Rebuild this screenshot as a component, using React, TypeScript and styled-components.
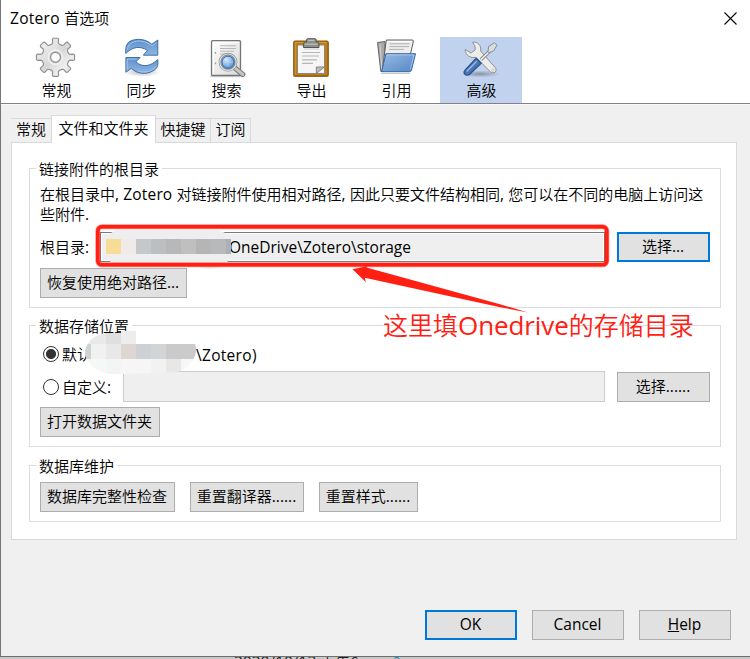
import React from "react";
import styled, { createGlobalStyle } from "styled-components";

const GlobalStyle = createGlobalStyle`
  * { box-sizing: border-box; }
  html, body { margin: 0; padding: 0; }
  body {
    width: 750px;
    height: 659px;
    overflow: hidden;
    background: #c9c9c9;
    color: #000;
    font: 350 15px/20px "Noto Sans CJK SC", "Noto Sans", sans-serif;
  }
`;

const Screen = styled.div`
  position: relative;
  width: 750px;
  height: 659px;
  overflow: hidden;
  display: flex;
  flex-direction: column;
`;

const Dialog = styled.div`
  height: 657px;
  flex: none;
  display: flex;
  flex-direction: column;
  background: #f0f0f0;
  border-left: 1px solid #777;
  border-bottom: 1px solid #6f6f6f;
`;

const Latin = styled.span<{ $spacing?: number; $size?: number }>`
  font-family: "Open Sans", "Noto Sans", sans-serif;
  font-size: ${(p) => p.$size ?? 15.5}px;
  font-weight: 400;
  line-height: 1;
  letter-spacing: ${(p) => p.$spacing ?? 0}px;
  white-space: pre;
`;

const TitleBar = styled.header`
  height: 37px;
  display: flex;
  align-items: center;
  justify-content: space-between;
  padding: 0 13px 1px 9px;
  background: #fff;
`;

const Toolbar = styled.nav`
  display: flex;
  gap: 3px;
  height: 67px;
  padding-left: 14px;
  background: #fff;
  border-bottom: 1px solid #858087;
`;

const ToolButton = styled.div<{ $active?: boolean }>`
  width: 82px;
  height: 66px;
  display: flex;
  flex-direction: column;
  align-items: center;
  background: ${(p) => (p.$active ? "#c1d2ee" : "transparent")};
  svg { flex: none; display: block; }
  span { line-height: 20px; margin: 1px 0 0 1px; }
`;

const TabStrip = styled.div`
  display: flex;
  align-items: flex-end;
  height: 38px;
  padding-left: 10px;
  border-top: 1px solid #fafafa;
`;

const Tab = styled.div<{ $width: number; $active?: boolean; $first?: boolean }>`
  width: ${(p) => p.$width}px;
  height: ${(p) => (p.$active ? 28 : 24)}px;
  margin-bottom: ${(p) => (p.$active ? -1 : 0)}px;
  padding-bottom: ${(p) => (p.$active ? 4 : 3)}px;
  z-index: ${(p) => (p.$active ? 1 : 0)};
  display: flex;
  align-items: center;
  justify-content: center;
  white-space: nowrap;
  background: ${(p) => (p.$active ? "#fff" : "#f0f0f0")};
  border: solid #d9d9d9;
  border-width: ${(p) => (p.$active ? "1px 1px 0" : p.$first ? "1px 0 0" : "1px 1px 0 0")};
`;

const Panel = styled.main`
  width: 726px;
  height: 398px;
  margin-left: 10px;
  padding: 17px 15px 0 17px;
  display: flex;
  flex-direction: column;
  background: #fff;
  border: 1px solid #d9d9d9;
`;

const Group = styled.section<{ $height: number; $top: number }>`
  height: ${(p) => p.$height}px;
  margin-top: ${(p) => p.$top}px;
  border: 1px solid #dcdcdc;
  padding: 0 10px;
  display: flex;
  flex-direction: column;
  align-items: flex-start;
`;

const Legend = styled.h2`
  margin: -10px 0 0 -4px;
  padding: 0 3px;
  height: 20px;
  font: inherit;
  background: #fff;
  white-space: nowrap;
`;

const Description = styled.p`
  margin: 5px 0 8px;
  line-height: 20px;
  white-space: nowrap;
`;

const Row = styled.div<{ $height?: number; $top?: number }>`
  width: 100%;
  height: ${(p) => p.$height ?? 30}px;
  margin-top: ${(p) => p.$top ?? 0}px;
  display: flex;
  align-items: center;
`;

const Label = styled.label<{ $width?: number }>`
  width: ${(p) => (p.$width ? `${p.$width}px` : "auto")};
  flex: none;
  white-space: nowrap;
`;

const Field = styled.div<{ $width: number; $height: number; $dim?: boolean }>`
  width: ${(p) => p.$width}px;
  height: ${(p) => p.$height}px;
  flex: none;
  margin-right: 12px;
  padding: 2px 0 0 ${(p) => (p.$dim ? 0 : 128)}px;
  display: flex;
  align-items: center;
  background: #efefef;
  border: 1px solid ${(p) => (p.$dim ? "#ccc" : "#7a7a7a")};
  box-shadow: ${(p) => (p.$dim ? "none" : "inset 0 0 0 1px #fff")};
`;

const Button = styled.button<{ $width: number; $primary?: boolean }>`
  width: ${(p) => p.$width}px;
  height: 30px;
  flex: none;
  padding: 0 1px 2px 0;
  font: inherit;
  color: #000;
  white-space: nowrap;
  background: #e1e1e1;
  border: ${(p) => (p.$primary ? "2px solid #0078d7" : "1px solid #adadad")};
  border-radius: 0;
`;

const Spaced = styled.div<{ $top: number }>`
  margin-top: ${(p) => p.$top}px;
  display: flex;
  gap: 15px;
`;

const Radio = styled.i<{ $on?: boolean }>`
  width: 16px;
  height: 16px;
  margin: 0 3px 0 3px;
  flex: none;
  border: 1px solid #333;
  border-radius: 50%;
  background: ${(p) => (p.$on ? "radial-gradient(circle, #333 4.6px, #fff 5.4px)" : "#fff")};
`;

const HiddenPath = styled.span`
  width: 104px;
  flex: none;
`;

const ProfilePath = styled.div`
  padding-top: 3px;
  display: flex;
`;

const Footer = styled.footer`
  display: flex;
  justify-content: flex-end;
  gap: 15px;
  margin-top: 70px;
  padding-right: 19px;
`;

const Behind = styled.div`
  height: 2px;
  flex: none;
  overflow: hidden;
  display: flex;
  gap: 30px;
  padding-left: 234px;
  color: #222;
  > span { margin-top: -5px; }
  > span + span { color: #2889b5; }
`;

const Overlay = styled.svg`
  position: absolute;
  inset: 0;
  pointer-events: none;
`;

const Note = styled.div`
  position: absolute;
  left: 383px;
  top: 306px;
  height: 36px;
  font-size: 25px;
  line-height: 36px;
  color: #ff2013;
  white-space: nowrap;
`;

const iconProps = (i: number) => ({
  width: 44,
  height: 42,
  viewBox: `${34 + 85 * i} 37 44 42`,
});

function gearPath() {
  const pts: string[] = [];
  for (let k = 0; k < 8; k++) {
    const base = (k * Math.PI) / 4;
    for (const [da, r] of [[-0.29, 13.6], [-0.2, 14.6], [-0.17, 18.3], [-0.12, 19.2], [0.12, 19.2], [0.17, 18.3], [0.2, 14.6], [0.29, 13.6]]) {
      pts.push(`${(55.5 + r * Math.sin(base + da)).toFixed(2)} ${(57.3 - r * Math.cos(base + da)).toFixed(2)}`);
    }
  }
  return `M${pts.join("L")}Z`;
}

const GearIcon = () => (
  <svg {...iconProps(0)}>
    <defs>
      <linearGradient id="gear" x1="0" y1="0" x2="1" y2="1">
        <stop offset="0" stopColor="#fafafa" />
        <stop offset=".5" stopColor="#d7d7d7" />
        <stop offset=".75" stopColor="#f0f0f0" />
        <stop offset="1" stopColor="#cfcfcf" />
      </linearGradient>
    </defs>
    <path d={gearPath()} fill="url(#gear)" stroke="#929292" strokeWidth="1.2" strokeLinejoin="round" />
    <circle cx="55.5" cy="57.3" r="7.2" fill="none" stroke="#f1f1f1" strokeWidth="1.5" />
    <circle cx="55.5" cy="57.3" r="5" fill="#fff" stroke="#979797" strokeWidth="1.4" />
  </svg>
);

const SyncIcon = () => (
  <svg {...iconProps(1)}>
    <defs>
      <linearGradient id="sync" x1="0" y1="0" x2="0" y2="1">
        <stop offset="0" stopColor="#5f91cb" />
        <stop offset="1" stopColor="#8db5e1" />
      </linearGradient>
      <radialGradient id="syncShade">
        <stop offset="0" stopColor="#777" stopOpacity=".5" />
        <stop offset="1" stopColor="#777" stopOpacity="0" />
      </radialGradient>
    </defs>
    <ellipse cx="142" cy="72" rx="19" ry="5" fill="url(#syncShade)" />
    <path d="M125.8 53.5C125.3 46 127 43 130 41.3C137 37.8 146 39.2 151.8 44.2L157.8 40V55.2H143.3L147.5 50.5C140 45.3 132 47 125.8 53.5Z" fill="url(#sync)" stroke="#3d6fae" />
    <path d="M125.9 57.5H140.2L135.8 61.8C143 68.2 151 66 157.8 59.5C158.5 66 157 68.5 153.8 70.4C146 75.2 137 73.8 131.2 68.4L125.9 72.2Z" fill="url(#sync)" stroke="#3d6fae" />
    <path d="M127.3 49C129 40.5 142 37.6 152 46L156.5 42.5M127.2 70V59H137M138 71C145 73.5 153 71 156.2 66" fill="none" stroke="#a8c7e9" strokeWidth="1" />
  </svg>
);

const SearchIcon = () => (
  <svg {...iconProps(2)}>
    <defs>
      <radialGradient id="lens" cx=".4" cy=".35">
        <stop offset="0" stopColor="#dcecff" />
        <stop offset="1" stopColor="#5e98dc" />
      </radialGradient>
      <linearGradient id="page" x1="0" y1="0" x2="1" y2="1">
        <stop offset="0" stopColor="#fff" />
        <stop offset="1" stopColor="#d9d9d9" />
      </linearGradient>
    </defs>
    <path d="M210 76.4H242" stroke="#aaa" strokeWidth="1.5" opacity=".5" />
    <rect x="211.5" y="40.7" width="29" height="34.8" rx="1" fill="url(#page)" stroke="#74767a" strokeWidth="1.3" />
    <path d="M213.3 74V42.5H239" fill="none" stroke="#fff" />
    <path d="M220 45.8h16M220 48.5h16M220 51.2h14M220 54h5" stroke="#b5b5b5" />
    <path d="M215.5 52v1.8M215.5 62.5v1.8" stroke="#999" strokeWidth="1.3" />
    <path d="M235 68L242.8 74.4" stroke="#777" strokeWidth="5.2" strokeLinecap="round" />
    <path d="M235 68L242.8 74.4" stroke="#c4c4c1" strokeWidth="3.2" strokeLinecap="round" />
    <circle cx="228" cy="62.2" r="8" fill="url(#lens)" stroke="#858783" strokeWidth="2.7" />
    <circle cx="228" cy="62.2" r="8.2" fill="none" stroke="#e1e1df" strokeWidth="1.2" />
    <circle cx="228" cy="62.2" r="6" fill="none" stroke="#3c70b5" />
    <path d="M223 62.2h10M228 57.5v9" stroke="#b8d4f5" opacity=".7" />
  </svg>
);

const ExportIcon = () => (
  <svg {...iconProps(3)}>
    <path d="M293 76.5h36" stroke="#777" opacity=".35" />
    <rect x="293.8" y="41" width="34.4" height="35.2" rx="1.5" fill="#c17d11" stroke="#815207" strokeWidth="1.2" />
    <path d="M295.3 75V42.5H326.8" fill="none" stroke="#d99c3b" opacity=".8" />
    <path d="M297.5 45H324.5V73.5H297.5Z" fill="#f6f6f6" stroke="#878787" />
    <path d="M316.3 73.5V67H324.5Z" fill="#b9bab7" stroke="#888" />
    <path d="M302 52.5h18M302 56h17M302 59.8h15M302 63.4h11" stroke="#b6b6b6" strokeWidth="1.2" />
    <path d="M303.5 47.5V43.5Q303.5 42 305.5 42H306.5V39.8Q306.5 38.7 308 38.7H315Q316.2 38.7 316.2 39.8V42H317Q319 42 319 43.5V47.5Z" fill="#8e908c" stroke="#555753" />
    <path d="M305 44.2H317.5M308 40.3H314.5" stroke="#c9cbc8" />
    <path d="M304 49H319" stroke="#777" opacity=".3" />
  </svg>
);

const FolderIcon = () => (
  <svg {...iconProps(4)}>
    <defs>
      <linearGradient id="folder" x1="0" y1="0" x2="1" y2="1">
        <stop offset="0" stopColor="#98bbe3" />
        <stop offset="1" stopColor="#5387c6" />
      </linearGradient>
    </defs>
    <path d="M381 73.5H410" stroke="#777" opacity=".4" />
    <path d="M377.7 42.5L385 41.5V45L384 71.5H380.8L377.7 44Z" fill="#a9a9a9" stroke="#626262" />
    <path d="M380 44.5L381.8 69.5" stroke="#d5d5d5" />
    <path d="M386.3 40H412.8Q414 40.5 413 43L410 56L382.5 69Z" fill="#eee" stroke="#5d5f5d" />
    <path d="M388 41.5H411.5" stroke="#fff" />
    <path d="M389.5 43.8h20M389.5 46.6h19.5M389 49.4h15" stroke="#b0b0b0" />
    <path d="M385.9 53.7H415.5L411.5 70Q411 71.7 409.5 71.7H381.6Z" fill="url(#folder)" stroke="#3467a7" strokeLinejoin="round" />
    <path d="M386.9 54.9H414L410.3 69.5" fill="none" stroke="#b5cfec" strokeWidth=".8" />
  </svg>
);

const ToolsIcon = () => (
  <svg {...iconProps(5)}>
    <defs>
      <radialGradient id="toolsShade">
        <stop offset="0" stopColor="#444" stopOpacity=".45" />
        <stop offset="1" stopColor="#444" stopOpacity="0" />
      </radialGradient>
    </defs>
    <ellipse cx="480" cy="74" rx="20" ry="3.5" fill="url(#toolsShade)" />
    <path d="M472.5 42.2C477.5 41.5 481.6 45.3 480.6 51L495.8 68.3Q496.8 71 495 72.4Q492.8 73.5 490.5 72L476 57.3C470.7 58.5 465.3 55.5 465.2 49.4L471 53L475.2 50L475 46Z" fill="#ededeb" stroke="#919291" strokeLinejoin="round" />
    <circle cx="493" cy="70.2" r="1.2" fill="#fff" stroke="#999" strokeWidth=".5" />
    <path d="M480.8 59.8L489.6 51.2" stroke="#888a89" strokeWidth="3.4" />
    <path d="M480.8 59.8L489.6 51.2" stroke="#eee" strokeWidth="1.6" />
    <path d="M488 51.7L488.7 46.4L494.4 42.8L497 45.2L493.6 51L488.8 52.7Z" fill="#dadddf" stroke="#878e98" />
    <path d="M465.2 69.8L476.1 58.4L481.2 63.3L469.5 74.5Q466 76 464.4 73.6Q463.5 71.4 465.2 69.8Z" fill="#4776b2" stroke="#214c87" strokeWidth="1.1" />
    <path d="M466.7 71.4L476.8 61" stroke="#98b9de" strokeWidth="1.5" />
  </svg>
);

const tools: { label: string; icon: React.ReactNode }[] = [
  { label: "常规", icon: <GearIcon /> },
  { label: "同步", icon: <SyncIcon /> },
  { label: "搜索", icon: <SearchIcon /> },
  { label: "导出", icon: <ExportIcon /> },
  { label: "引用", icon: <FolderIcon /> },
  { label: "高级", icon: <ToolsIcon /> },
];

/* x, y, width, height, colour */
const pathMosaic: [number, number, number, number, string][] = [
  [106, 239, 15, 15, "#f7dc96"], [121, 239, 15, 15, "#f0ebe8"], [136, 239, 15, 15, "#c5c8cb"],
  [151, 239, 15, 15, "#bcbfc1"], [166, 239, 15, 15, "#b6b8ba"], [181, 239, 15, 15, "#bfbfbf"],
  [196, 239, 15, 15, "#b5b5b5"], [211, 239, 15, 15, "#b8b9ba"], [226, 239, 5, 15, "#aeb1b3"],
];

const profileMosaic: [number, number, number, number, string][] = [
  [85, 329, 21, 15, "#e9e9ea"], [106, 329, 15, 15, "#dfdfdf"], [121, 329, 15, 15, "#ededee"],
  [136, 340, 60, 4, "#fbfbfb"],
  [85, 344, 6, 15, "#d0d3d6"], [91, 344, 15, 15, "#f1f1f0"], [106, 344, 15, 15, "#e8e8e8"],
  [121, 344, 15, 15, "#ddd6d3"], [136, 344, 15, 15, "#cdd1d6"], [151, 344, 15, 15, "#d2d5d6"],
  [166, 344, 15, 15, "#cacaca"], [181, 344, 15, 15, "#cbcbcb"],
  [85, 359, 21, 15, "#f6f8f8"], [106, 359, 15, 15, "#f3f5f5"], [121, 359, 30, 15, "#f8f5f6"],
  [151, 359, 15, 15, "#f2f2f2"], [166, 359, 15, 15, "#e8e7e5"], [181, 359, 15, 15, "#f5f8f7"],
];

const Annotations = () => (
  <>
    <Overlay width="750" height="659" viewBox="0 0 750 659">
      <clipPath id="profileClip">
        <path d="M106 333H121V331H136V344H195Q198 352 193 360Q187 370 177 372L150 373L121 374H112Q99 374 91 365Q85 360 85 351Q88 336 106 333Z" />
      </clipPath>
      <path d="M118 230H216Q226 231 231 239V254Q229 262 222 267Q210 271 199 267H118Q108 262 106 254V239Q109 232 118 230Z" fill="#eee" />
      <g shapeRendering="crispEdges">
        {pathMosaic.map(([x, y, w, h, c]) => <rect key={x} x={x} y={y} width={w} height={h} fill={c} />)}
      </g>
      <g clipPath="url(#profileClip)" shapeRendering="crispEdges">
        {profileMosaic.map(([x, y, w, h, c]) => <rect key={`${x}-${y}`} x={x} y={y} width={w} height={h} fill={c} />)}
      </g>
      <rect x="97.8" y="226.8" width="509" height="38" rx="4" fill="none" stroke="#ff2013" strokeOpacity=".5" strokeWidth="5" />
      <rect x="97.8" y="226.8" width="509" height="38" rx="4" fill="none" stroke="#ff2013" strokeWidth="3.6" />
      <path d="M352.5 269.3L368 266L366.5 267.5L500 304.2L528 312.6L498 306.8L364.7 277.7L366 282.3Z" fill="#ff2013" />
    </Overlay>
    <Note>这里填<Latin $size={26} $spacing={-0.1}>Onedrive</Latin>的存储目录</Note>
  </>
);

export default function App() {
  return (
    <Screen>
      <GlobalStyle />
      <Dialog>
        <TitleBar>
          <span><Latin $spacing={0.3}>Zotero </Latin>首选项</span>
          <svg width="13" height="13" viewBox="0 0 13 13">
            <path d="M.5 .5L12.5 12.5M12.5 .5L.5 12.5" stroke="#000" strokeWidth="1.1" />
          </svg>
        </TitleBar>
        <Toolbar>
          {tools.map((t, i) => (
            <ToolButton key={t.label} $active={i === 5}>{t.icon}<span>{t.label}</span></ToolButton>
          ))}
        </Toolbar>
        <TabStrip>
          <Tab $width={40} $first>常规</Tab>
          <Tab $width={105} $active>文件和文件夹</Tab>
          <Tab $width={55}>快捷键</Tab>
          <Tab $width={40}>订阅</Tab>
        </TabStrip>
        <Panel>
          <Group $height={140} $top={8}>
            <Legend>链接附件的根目录</Legend>
            <Description>
              在根目录中<Latin $spacing={0.15}>, Zotero </Latin>对链接附件使用相对路径<Latin $spacing={0.15}>, </Latin>因此只要文件结构相同<Latin $spacing={0.15}>, </Latin>您可以在不同的电脑上访问这<br />
              些附件<Latin>.</Latin>
            </Description>
            <Row>
              <Label $width={60}>根目录<Latin>:</Latin></Label>
              <Field $width={505} $height={30}><Latin>OneDrive\Zotero\storage</Latin></Field>
              <Button $width={93} $primary>选择<Latin>...</Latin></Button>
            </Row>
            <Spaced $top={6}><Button $width={147}>恢复使用绝对路径<Latin>...</Latin></Button></Spaced>
          </Group>
          <Group $height={122} $top={17}>
            <Legend>数据存储位置</Legend>
            <Row $height={24} $top={6}>
              <Radio $on />
              <Label>默认</Label><HiddenPath />
              <ProfilePath><Latin $spacing={0.3}>\Zotero)</Latin></ProfilePath>
            </Row>
            <Row $height={31} $top={5}>
              <Radio />
              <Label $width={61}>自定义<Latin>:</Latin></Label>
              <Field $width={482} $height={31} $dim />
              <Button $width={93}>选择<Latin>......</Latin></Button>
            </Row>
            <Spaced $top={5}><Button $width={120}>打开数据文件夹</Button></Spaced>
          </Group>
          <Group $height={57} $top={18}>
            <Legend>数据库维护</Legend>
            <Spaced $top={6}>
              <Button $width={135}>数据库完整性检查</Button>
              <Button $width={114}>重置翻译器<Latin>......</Latin></Button>
              <Button $width={99}>重置样式<Latin>......</Latin></Button>
            </Spaced>
          </Group>
        </Panel>
        <Footer>
          <Button $width={92} $primary><Latin>OK</Latin></Button>
          <Button $width={92}><Latin>Cancel</Latin></Button>
          <Button $width={92}><Latin><u>H</u>elp</Latin></Button>
        </Footer>
      </Dialog>
      <Behind><span><Latin>2020/10/13 </Latin>下午6:</span><span>0</span></Behind>
      <Annotations />
    </Screen>
  );
}
